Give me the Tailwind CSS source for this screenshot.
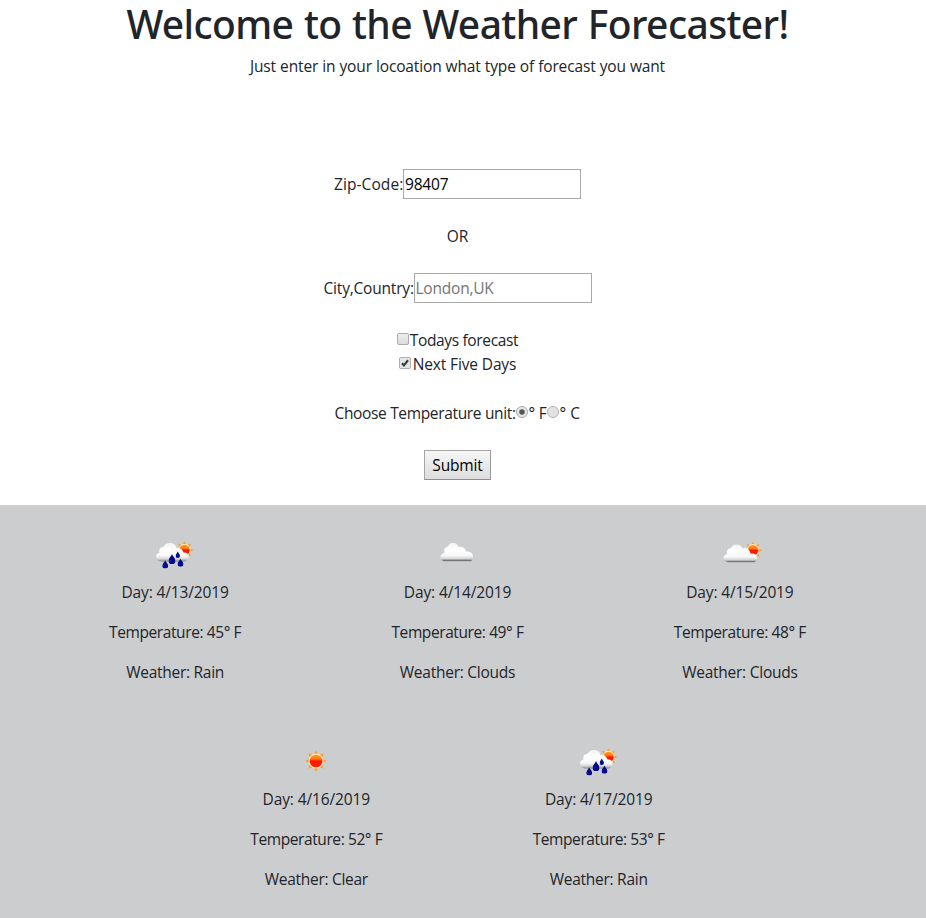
<!DOCTYPE html>
<html lang="en">
<head>
<meta charset="utf-8">
<title>Weather Forecaster</title>
<script src="https://cdn.jsdelivr.net/npm/@tailwindcss/browser@4"></script>
</head>
<body class="h-[918px] overflow-hidden bg-white font-['Open_Sans','Noto_Sans',sans-serif] text-[15.5px] leading-6 text-[#212529]">
<svg class="absolute size-0">
  <defs>
    <linearGradient id="sunFill" x1="0" y1="0" x2="0" y2="1"><stop offset="0" stop-color="#ff9a20"/><stop offset=".35" stop-color="#ff7a10"/><stop offset=".5" stop-color="#fd1500"/><stop offset="1" stop-color="#ff2000"/></linearGradient>
    <linearGradient id="cloudFill" x1="0" y1="0" x2="0" y2="1"><stop offset="0" stop-color="#f2f2f2"/><stop offset=".35" stop-color="#ffffff"/><stop offset=".7" stop-color="#f8f8f8"/><stop offset=".86" stop-color="#d8d8d8"/><stop offset="1" stop-color="#858585"/></linearGradient>
    <symbol id="sun" viewBox="0 0 24 24">
      <path fill="#fb9a1c" d="M12 .8 14.200 5.500 9.800 5.500ZM12 23.200 9.800 18.500 14.200 18.500ZM.8 12 5.500 9.800 5.500 14.200ZM23.200 12 18.500 14.200 18.500 9.800ZM4 4 9 6 6 9ZM20 4 18 9 15 6ZM4 20 6 15 9 18ZM20 20 15 18 18 15Z"/>
      <circle cx="12" cy="12" r="7.800" fill="#ffe6b4"/>
      <circle cx="12" cy="12" r="6.600" fill="url(#sunFill)"/>
    </symbol>
    <symbol id="drop" viewBox="0 0 6 9" preserveAspectRatio="none"><path fill="#020b8c" d="M3 0C3.600 2 6 4 6 6A3 3 0 0 1 0 6C0 4 2.400 2 3 0Z"/><path stroke="#2d3dc0" stroke-width=".7" fill="none" d="M1.500 5.300V6.700"/></symbol>
    <symbol id="rain" viewBox="0 0 50 50">
      <use href="#sun" x="25" y="12.500" width="19" height="19"/>
      <path fill="url(#cloudFill)" d="M11 33.500C5 33 4.500 25.500 9.500 24.500 8.500 20.500 11 19 13.500 18.700 15.500 13.500 25.500 13.500 26.500 20 30 19.500 33 21.500 33.500 24.500 38 24 40 28 38 31 37 33 35 33.500 33 33.500Z"/>
      <use href="#drop" x="18.500" y="26" width="7" height="10"/>
      <use href="#drop" x="12.200" y="32.200" width="6" height="8.300"/>
      <use href="#drop" x="25.500" y="23.500" width="4.500" height="6.500"/>
      <use href="#drop" x="27.500" y="30.500" width="6" height="8.300"/>
    </symbol>
    <symbol id="clouds" viewBox="0 0 50 50">
      <path fill="url(#cloudFill)" d="M11 33C7.500 31.500 7 26 12.500 25 11.500 21 13 19 16 18.500 17.500 13.500 25 13.500 26.500 19 30 18 33.500 20 34 23.500 38.500 23 41.500 25.500 41 29 41 31.500 39.500 33 38 33Z"/>
      <path stroke="#747474" stroke-width="1.300" d="M11 32.500H39.500"/>
    </symbol>
    <symbol id="partly" viewBox="0 0 50 50">
      <use href="#sun" x="28.500" y="12.800" width="19" height="19"/>
      <path fill="url(#cloudFill)" d="M12.500 34C7.500 32.500 7 27.500 12 26 11.500 22 13 20.500 16 20 18 15 26 15.500 27.500 20.500 31 18.500 34.500 21 35.500 25.500 40 25 42.800 27 42 31 41.500 33 40.500 34 39 34Z"/>
      <path stroke="#747474" stroke-width="1.200" d="M12.500 33.600H40"/>
    </symbol>
    <symbol id="clear" viewBox="0 0 50 50"><use href="#sun" x="13.500" y="14.500" width="23" height="23"/></symbol>
  </defs>
</svg>

<header class="w-[915px] text-center">
  <h1 class="h-[54px] font-['Noto_Sans',sans-serif] text-[39px] leading-[48px] font-medium tracking-[-0.6px] [word-spacing:1px]">Welcome to the Weather Forecaster!</h1>
  <p class="tracking-[-0.14px] [word-spacing:0.2px]">Just enter in your locoation what type of forecast you want</p>
</header>

<form class="mt-[91px] flex h-[336px] w-[915px] flex-col items-center">
  <label class="flex h-[30px] items-center"><span class="w-[69px] tracking-[0.08px] whitespace-nowrap">Zip-Code:</span><input type="text" value="98407" class="h-[30px] w-[178px] border border-[#a9a9a9] px-px tracking-[-0.2px] text-black"></label>
  <p class="mt-[25px] h-[25px]">OR</p>
  <label class="mt-6 flex h-[30px] items-center"><span class="w-[90px] tracking-[-0.19px] whitespace-nowrap">City,Country:</span><input type="text" placeholder="London,UK" class="h-[30px] w-[178px] border border-[#a9a9a9] px-px tracking-[-0.22px] placeholder:text-[#757575]"></label>
  <label class="mt-[25px] flex h-6 tracking-[-0.35px]"><input type="checkbox" class="mt-[5px] mr-px size-3 appearance-none rounded-[2px] border border-[#ababab] bg-linear-to-b from-[#eeeeee] to-[#dcdcdc]"><span>Todays forecast</span></label>
  <label class="flex h-6 tracking-[-0.14px]"><svg class="mt-[5px] size-3" viewBox="0 0 13 13"><rect x=".5" y=".5" width="12" height="12" rx="1.500" fill="#e5e5e5" stroke="#a5a5a5"/><path d="M3.200 6.800 5.300 9 9.800 3.500" fill="none" stroke="#3c3c3c" stroke-width="2.300"/></svg><span class="pl-[2px]">Next Five Days</span></label>
  <div class="mt-[25px] flex h-6"><span class="w-[181px] tracking-[-0.34px] whitespace-nowrap">Choose Temperature unit:</span><svg class="mt-[5px] mr-px size-3" viewBox="0 0 13 13"><circle cx="6.500" cy="6.500" r="6" fill="#e5e5e5" stroke="#a5a5a5"/><circle cx="6.500" cy="6.500" r="3" fill="#555"/></svg><span class="w-[18px] tracking-[-0.2px] whitespace-nowrap">° F</span><svg class="mt-[5px] mr-px size-3" viewBox="0 0 13 13"><circle cx="6.500" cy="6.500" r="6" fill="#e2e2e2" stroke="#b0b0b0"/></svg><span class="w-[21px] whitespace-nowrap">° C</span></div>
  <button type="button" class="mt-[25px] h-[30px] w-[67px] border border-t-[#a6a6a6] border-r-[#999] border-b-[#8f8f8f] border-l-[#a6a6a6] bg-linear-to-b from-[#f6f6f6] to-[#dddddd] tracking-[-0.15px] text-black">Submit</button>
</form>

<main class="h-[413px] bg-[#cccdcf] pt-[23px]">
  <section class="flex w-[915px] justify-center text-center">
    <article class="flex h-[207px] w-[282.4px] flex-col items-center"><svg class="mb-[2px] size-[50px]"><use href="#rain"/></svg><p class="mb-4 tracking-[-0.12px]">Day: 4/13/2019</p><p class="mb-4 tracking-[-0.4px]">Temperature: 45° F</p><p class="tracking-[-0.27px]">Weather: Rain</p></article>
    <article class="flex h-[207px] w-[282.4px] flex-col items-center"><svg class="mb-[2px] size-[50px]"><use href="#clouds"/></svg><p class="mb-4 tracking-[-0.12px]">Day: 4/14/2019</p><p class="mb-4 tracking-[-0.4px]">Temperature: 49° F</p><p class="tracking-[-0.25px]">Weather: Clouds</p></article>
    <article class="flex h-[207px] w-[282.4px] flex-col items-center"><svg class="mb-[2px] size-[50px]"><use href="#partly"/></svg><p class="mb-4 tracking-[-0.12px]">Day: 4/15/2019</p><p class="mb-4 tracking-[-0.4px]">Temperature: 48° F</p><p class="tracking-[-0.25px]">Weather: Clouds</p></article>
  </section>
  <section class="flex w-[915px] justify-center text-center">
    <article class="flex w-[282.4px] flex-col items-center"><svg class="mb-[2px] size-[50px]"><use href="#clear"/></svg><p class="mb-4 tracking-[-0.12px]">Day: 4/16/2019</p><p class="mb-4 tracking-[-0.4px]">Temperature: 52° F</p><p class="tracking-[-0.3px]">Weather: Clear</p></article>
    <article class="flex w-[282.4px] flex-col items-center"><svg class="mb-[2px] size-[50px]"><use href="#rain"/></svg><p class="mb-4 tracking-[-0.12px]">Day: 4/17/2019</p><p class="mb-4 tracking-[-0.4px]">Temperature: 53° F</p><p class="tracking-[-0.27px]">Weather: Rain</p></article>
  </section>
</main>
</body>
</html>
